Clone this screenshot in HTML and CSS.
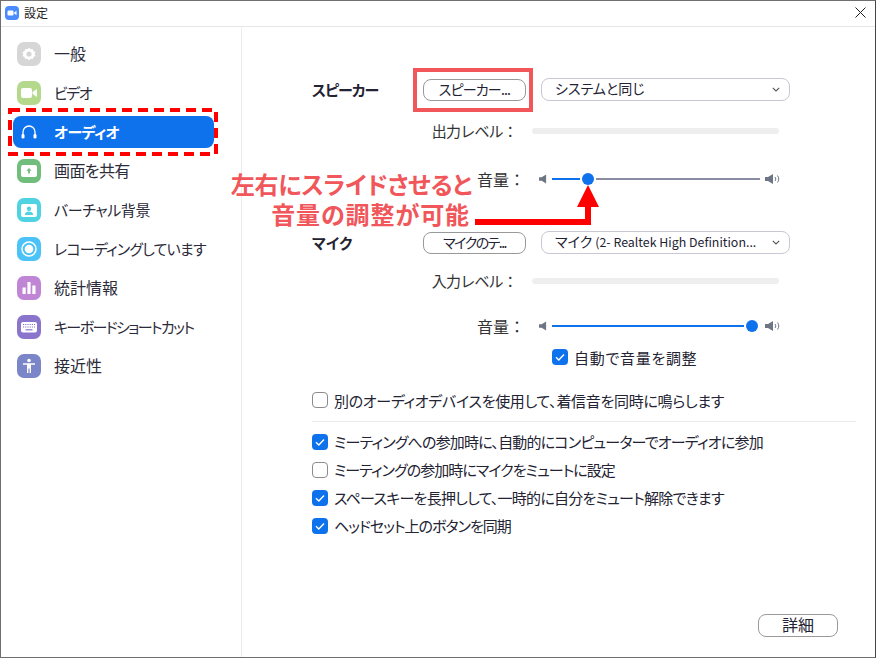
FILE: index.html
```html
<!DOCTYPE html>
<html lang="ja">
<head>
<meta charset="utf-8">
<title>設定</title>
<link rel="stylesheet" href="styles.css">
</head>
<body>
<div class="window">
  <header class="titlebar">
    <svg class="app-logo" viewBox="0 0 14 14"><rect width="14" height="14" rx="4" fill="#4a8cff"/><rect x="2.5" y="4.5" width="6" height="5" rx="1.2" fill="#fff"/><path d="M9.2 6.4 11.5 4.8V9.2L9.2 7.6Z" fill="#fff"/></svg>
    <span class="title">設定</span>
    <svg class="close" viewBox="0 0 11 11"><path d="M.5.5 10.5 10.5M10.500.5 .5 10.500" stroke="#222" stroke-width="1" fill="none"/></svg>
  </header>
  <div class="content">
    <nav class="sidebar">
      <div class="nav-item kanji"><svg class="nav-icon" viewBox="0 0 24 24"><rect width="24" height="24" rx="7" fill="#d6d6d6"/><path d="M12 5.500 13.600 7.200 15.800 6.900 16.400 9 18.500 10 17.600 12 18.500 14 16.400 15 15.800 17.100 13.600 16.800 12 18.500 10.400 16.800 8.200 17.100 7.600 15 5.500 14 6.400 12 5.500 10 7.600 9 8.200 6.900 10.400 7.200Z" fill="#fff"/><circle cx="12" cy="12" r="2.600" fill="#d6d6d6"/></svg><span>一般</span></div>
      <div class="nav-item ls-video"><svg class="nav-icon" viewBox="0 0 24 24"><rect width="24" height="24" rx="7" fill="#b4d98c"/><rect x="4" y="7" width="11" height="10" rx="2" fill="#fff"/><path d="M15.500 11 20 8V16L15.500 13Z" fill="#fff"/></svg><span>ビデオ</span></div>
      <div class="nav-item active"><svg class="nav-icon" viewBox="0 0 24 24"><path d="M6 17V12a6 6 0 0 1 12 0V17" stroke="#fff" stroke-width="1.300" fill="none"/><rect x="4.500" y="14" width="3" height="4.600" rx="1.400" fill="#fff"/><rect x="16.500" y="14" width="3" height="4.600" rx="1.400" fill="#fff"/></svg><span>オーディオ</span></div>
      <div class="nav-item kanji ls-share"><svg class="nav-icon" viewBox="0 0 24 24"><rect width="24" height="24" rx="7" fill="#70bd7c"/><rect x="4" y="6" width="16" height="12" rx="2" fill="#fff"/><path d="M12 9 14.600 11.800H12.900V14.600H11.100V11.800H9.400Z" fill="#70bd7c"/></svg><span>画面を共有</span></div>
      <div class="nav-item ls-bg"><svg class="nav-icon" viewBox="0 0 24 24"><rect width="24" height="24" rx="7" fill="#4fd3e3"/><rect x="4" y="6" width="16" height="13" rx="2" fill="#fff"/><circle cx="12" cy="10.800" r="2.200" fill="#4fd3e3"/><path d="M7.800 17c.3-2.400 2-3.400 4.200-3.400s3.900 1 4.200 3.400Z" fill="#4fd3e3"/></svg><span>バーチャル背景</span></div>
      <div class="nav-item ls-rec"><svg class="nav-icon" viewBox="0 0 24 24"><rect width="24" height="24" rx="7" fill="#4cc3f8"/><circle cx="12" cy="12" r="7" fill="none" stroke="#fff" stroke-width="1.500"/><circle cx="12" cy="12" r="4.300" fill="#fff"/></svg><span>レコーディングしています</span></div>
      <div class="nav-item kanji"><svg class="nav-icon" viewBox="0 0 24 24"><rect width="24" height="24" rx="7" fill="#c185d6"/><rect x="5.500" y="11.500" width="3.200" height="6.500" fill="#fff"/><rect x="10.400" y="6" width="3.200" height="12" fill="#fff"/><rect x="15.300" y="9.500" width="3.200" height="8.500" fill="#fff"/></svg><span>統計情報</span></div>
      <div class="nav-item ls-kbd"><svg class="nav-icon" viewBox="0 0 24 24"><rect width="24" height="24" rx="7" fill="#8b75cc"/><rect x="4" y="7" width="16" height="10.500" rx="2" fill="#fff"/><path d="M6 9.500H18M6 12H18" stroke="#8b75cc" stroke-width="1.200" stroke-dasharray="1.200 1"/><path d="M8.500 14.800H15.500" stroke="#8b75cc" stroke-width="1.200"/></svg><span>キーボードショートカット</span></div>
      <div class="nav-item kanji"><svg class="nav-icon" viewBox="0 0 24 24"><rect width="24" height="24" rx="7" fill="#7b86c9"/><circle cx="12" cy="6.500" r="1.800" fill="#fff"/><path d="M6 9.300H18V10.800H14V19H12.600V14.500H11.400V19H10V10.800H6Z" fill="#fff"/></svg><span>接近性</span></div>
    </nav>
    <main class="main">
      <div class="row r-speaker">
        <span class="group-label ls-speaker">スピーカー</span>
        <button class="btn ls-btn-spk">スピーカー...</button>
        <div class="select"><span>システムと同じ</span><svg class="chev" viewBox="0 0 8 5"><path d="M.8.8 4 4 7.200.8" fill="none" stroke="#555" stroke-width="1.100"/></svg></div>
      </div>
      <div class="row r-level-out">
        <span class="field-label">出力レベル：</span>
        <div class="level"></div>
      </div>
      <div class="row r-vol-out">
        <span class="field-label vol">音量：</span>
        <div class="slider">
          <svg class="spk" viewBox="0 0 9 10"><path d="M0 3H3L8 0V10L3 7H0Z" fill="#6e7685"/></svg>
          <div class="track"><div class="fill fill-low"></div><div class="thumb"></div><div class="rest"></div></div>
          <svg class="spk-loud" viewBox="0 0 15 10"><path d="M0 3H3L8 0V10L3 7H0Z" fill="#6e7685"/><path d="M10 3C11 4.500 11 5.500 10 7M12.500 1.500C14.200 4 14.200 6 12.500 8.500" fill="none" stroke="#6e7685"/></svg>
        </div>
      </div>
      <div class="row r-mic">
        <span class="group-label">マイク</span>
        <button class="btn ls-btn-mic">マイクのテ...</button>
        <div class="select"><span>マイク <small>(2- Realtek High Definition...</small></span><svg class="chev" viewBox="0 0 8 5"><path d="M.8.8 4 4 7.200.8" fill="none" stroke="#555" stroke-width="1.100"/></svg></div>
      </div>
      <div class="row r-level-in">
        <span class="field-label">入力レベル：</span>
        <div class="level"></div>
      </div>
      <div class="row r-vol-in">
        <span class="field-label vol">音量：</span>
        <div class="slider">
          <svg class="spk" viewBox="0 0 9 10"><path d="M0 3H3L8 0V10L3 7H0Z" fill="#6e7685"/></svg>
          <div class="track"><div class="fill fill-full"></div><div class="thumb"></div></div>
          <svg class="spk-loud" viewBox="0 0 15 10"><path d="M0 3H3L8 0V10L3 7H0Z" fill="#6e7685"/><path d="M10 3C11 4.500 11 5.500 10 7M12.500 1.500C14.200 4 14.200 6 12.500 8.500" fill="none" stroke="#6e7685"/></svg>
        </div>
      </div>
      <div class="check r-auto"><span class="box on"><svg viewBox="0 0 16 16"><path d="M4 8.300 6.800 11 12 5.600" fill="none" stroke="#fff" stroke-width="1.400"/></svg></span><span class="ls-auto">自動で音量を調整</span></div>
      <div class="check r-ring"><span class="box"></span><span class="ls-ring">別のオーディオデバイスを使用して、着信音を同時に鳴らします</span></div>
      <div class="divider"></div>
      <div class="check-list">
        <div class="check"><span class="box on"><svg viewBox="0 0 16 16"><path d="M4 8.300 6.800 11 12 5.600" fill="none" stroke="#fff" stroke-width="1.400"/></svg></span><span class="ls-join">ミーティングへの参加時に、自動的にコンピューターでオーディオに参加</span></div>
        <div class="check"><span class="box"></span><span class="ls-mute">ミーティングの参加時にマイクをミュートに設定</span></div>
        <div class="check"><span class="box on"><svg viewBox="0 0 16 16"><path d="M4 8.300 6.800 11 12 5.600" fill="none" stroke="#fff" stroke-width="1.400"/></svg></span><span class="ls-space">スペースキーを長押しして、一時的に自分をミュート解除できます</span></div>
        <div class="check"><span class="box on"><svg viewBox="0 0 16 16"><path d="M4 8.300 6.800 11 12 5.600" fill="none" stroke="#fff" stroke-width="1.400"/></svg></span><span class="ls-head">ヘッドセット上のボタンを同期</span></div>
      </div>
      <div class="footer"><button class="btn-detail">詳細</button></div>
    </main>
  </div>
  <svg class="mark-nav" viewBox="0 0 210 48"><rect x="2" y="2" width="206" height="44" fill="none" stroke="#f00" stroke-width="4" stroke-dasharray="10 6"/></svg>
  <div class="mark-btn"></div>
  <div class="callout"><span class="callout-1">左右にスライドさせると</span><br><span class="callout-2">音量の調整が可能</span></div>
  <svg class="arrow" viewBox="0 0 130 45"><path d="M0 37H113V20" fill="none" stroke="#f00" stroke-width="6"/><path d="M113 0 124 22H102Z" fill="#f00"/></svg>
</div>
</body>
</html>
```
FILE: styles.css
```css
* { box-sizing: border-box; }
html, body { margin: 0; padding: 0; }
body { background: #fff; font-family: "Noto Sans CJK JP", "Noto Sans", sans-serif; color: #232333; }
.window {
  position: relative; width: 876px; height: 658px; background: #fff;
  border: 1px solid #6f6f6f; border-right-color: #444;
  display: flex; flex-direction: column; overflow: hidden;
  font-size: 15px; font-feature-settings: "palt";
}
.titlebar {
  height: 26px; flex: none; display: flex; align-items: center;
  border-bottom: 1px solid #e6e6e6; padding: 0 0 2px 4px;
}
.app-logo { width: 14px; height: 14px; }
.title { margin-left: 5px; font-size: 12px; color: #222; }
.close { width: 11px; height: 11px; margin-left: auto; margin-right: 9px; }
.content { flex: 1; display: flex; min-height: 0; }
.sidebar {
  width: 241px; flex: none; border-right: 1px solid #ececec;
  padding: 11px 0 0 12px; display: flex; flex-direction: column; gap: 7px;
}
.nav-item {
  width: 201px; height: 32px; display: flex; align-items: center;
  padding-left: 4px; gap: 13px; border-radius: 8px; color: #2b2b3a; white-space: nowrap;
}
.nav-item span { padding-bottom: 2px; }
.nav-item.kanji { font-size: 16px; }
.ls-video { letter-spacing: -1.500px; }
.ls-share { letter-spacing: -.6px; }
.ls-bg { letter-spacing: -.4px; }
.ls-rec { letter-spacing: -.8px; }
.ls-kbd { letter-spacing: -1.600px; }
.nav-icon { width: 24px; height: 24px; flex: none; }
.nav-item.active { background: #0e72ed; color: #fff; font-weight: 700; letter-spacing: -.6px; }
.main { flex: 1; padding: 51px 0 0 70px; display: flex; flex-direction: column; min-width: 0; }
.row { display: flex; align-items: center; height: 23px; flex: none; }
.group-label { width: 111px; font-weight: 700; font-size: 15px; }
.ls-speaker { letter-spacing: -1px; }
.btn {
  width: 103px; height: 22px; margin: 0 15px 0 0; padding: 0 0 2px; background: #fff;
  border: 1px solid #999; border-radius: 8px; font: inherit; color: inherit;
  font-feature-settings: "palt"; font-size: 14px; line-height: 18px;
}
.ls-btn-spk { letter-spacing: -.8px; }
.ls-btn-mic { letter-spacing: -1.500px; }
.select {
  width: 249px; height: 23px; border: 1px solid #c8c8d4; border-radius: 8px;
  display: flex; align-items: center; padding: 0 9px 3px 13px; justify-content: space-between;
  font-size: 14px;
}
.select small { font-size: 12.4px; }
.chev { width: 8px; height: 5px; margin-top: 3px; }
.field-label { width: 205px; text-align: right; flex: none; color: #333; font-size: 15px; font-feature-settings: normal; letter-spacing: -.8px; }
.field-label.vol { width: 213px; font-size: 16px; letter-spacing: 0; }
.level { width: 247px; height: 6px; border-radius: 3px; background: #eeeeee; margin-left: 15px; }
.r-level-out { margin-top: 18px; }
.r-vol-out { margin-top: 25px; }
.r-mic { margin-top: 41px; }
.r-level-in { margin-top: 15px; }
.r-vol-in { margin-top: 22px; }
.slider { display: flex; align-items: center; margin-left: 14px; }
.spk { width: 8px; height: 10px; margin-right: 5px; }
.spk-loud { width: 15px; height: 10px; margin-left: 5px; }
.track { width: 208px; height: 12px; display: flex; align-items: center; }
.fill { height: 2px; background: #0e72ed; }
.fill-low { width: 28px; }
.fill-full { flex: 1; }
.rest { flex: 1; height: 2px; background: #8a8ca4; }
.thumb { width: 12px; height: 12px; border-radius: 50%; background: #0e72ed; flex: none; margin: 0 2px; }
.check { display: flex; align-items: center; gap: 6px; height: 22px; flex: none; white-space: nowrap; }
.box {
  width: 16px; height: 16px; border-radius: 4px; border: 1px solid #8c8c8c; background: #fff; flex: none;
  display: flex;
}
.box.on { background: #0e72ed; border: 0; }
.box svg { width: 16px; height: 16px; }
.ls-auto { letter-spacing: .7px; }
.ls-ring { letter-spacing: -.3px; }
.ls-join, .ls-mute, .ls-space, .ls-head { padding-bottom: 2px; }
.ls-join { letter-spacing: -.8px; }
.ls-mute { letter-spacing: -.95px; }
.ls-space { letter-spacing: -.75px; }
.ls-head { letter-spacing: -1px; }
.r-auto { margin: 9px 0 0 240px; }
.r-ring { margin-top: 21px; }
.divider { height: 1px; background: #ececec; margin: 10px 19px 0 0; }
.check-list { display: flex; flex-direction: column; gap: 6px; margin-top: 9px; }
.footer { margin-top: auto; padding: 0 37px 20px 0; display: flex; justify-content: flex-end; }
.btn-detail {
  width: 80px; height: 23px; padding: 0 0 3px; background: #fff; border: 1px solid #999; border-radius: 8px;
  font: inherit; color: inherit; font-size: 16px; line-height: 18px;
}
.mark-nav { position: absolute; left: 7px; top: 107px; width: 210px; height: 48px; }
.mark-btn { position: absolute; left: 412px; top: 67px; width: 120px; height: 44px; border: 4px solid #f0565a; }
.callout {
  position: absolute; left: 201px; top: 168px; width: 270px; text-align: right;
  font-size: 24px; line-height: 30px; font-weight: 700; color: #f0565a;
}
.callout-1 { letter-spacing: -.25px; }
.callout-2 { letter-spacing: .9px; margin-right: 2px; }
.arrow { position: absolute; left: 474px; top: 184px; width: 130px; height: 45px; }
```
